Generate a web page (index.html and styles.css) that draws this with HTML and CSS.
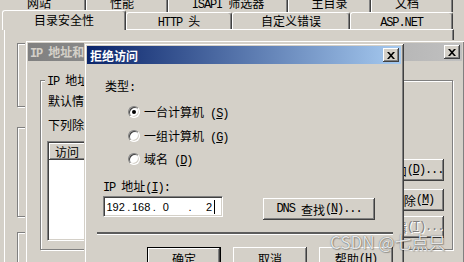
FILE: index.html
```html
<!DOCTYPE html>
<html>
<head>
<meta charset="utf-8">
<link rel="stylesheet" href="styles.css">
</head>
<body>
<div class="screen">
  <div class="sheet">
    <div class="tabrow row1">
      <div class="tab w-site">网站</div>
      <div class="tab w-perf">性能</div>
      <div class="tab w-isapi"><span class="lat">ISAPI&nbsp;</span>筛选器</div>
      <div class="tab w-home">主目录</div>
      <div class="tab w-doc">文档</div>
    </div>
    <div class="tabrow row2">
      <div class="tab sel w-sec">目录安全性</div>
      <div class="tab w-http"><span class="lat">HTTP&nbsp;</span>头</div>
      <div class="tab w-err">自定义错误</div>
      <div class="tab w-asp"><span class="lat">ASP.NET</span></div>
    </div>
    <div class="panel">
      <div class="bggroup g1"></div>
      <div class="bggroup g2"></div>
      <div class="bggroup g3"></div>
    </div>
  </div>

  <div class="win ipwin">
    <div class="titlebar">
      <span class="ttext"><span class="lat">IP&nbsp;</span>地址和域名限制</span>
      <span class="close"><svg width="8" height="7" viewBox="0 0 8 7"><path d="M0 0h2l2 2.2 2-2.2h2l-3 3.5 3 3.5h-2l-2-2.2-2 2.2h-2l3-3.5z" fill="#000"/></svg></span>
    </div>
    <div class="ibody">
      <div class="gbox">
        <div class="gtitle"><span class="lat">IP&nbsp;</span>地址访问限制</div>
        <div class="gcols">
          <div class="gleft">
            <div class="gline">默认情况下，所有计算机都将被: 授权访问</div>
            <div class="gline gl2">下列除外:</div>
            <div class="list">
              <div class="lhead"><span class="hcol">访问</span><span class="hcol hcol2"><span class="lat">IP&nbsp;</span>地址(子网掩码)</span></div>
            </div>
          </div>
          <div class="gright">
            <div class="btn sbtn">添加<span class="lat">(<u>D</u>)...</span></div>
            <div class="btn sbtn sb2">删除<span class="lat">(<u>M</u>)</span></div>
            <div class="btn sbtn sb3 disabled">编辑<span class="lat">(<u>T</u>)...</span></div>
          </div>
        </div>
      </div>
    </div>
  </div>

  <div class="win deny">
    <div class="titlebar">
      <span class="ttext">拒绝访问</span>
      <span class="close"><svg width="8" height="7" viewBox="0 0 8 7"><path d="M0 0h2l2 2.2 2-2.2h2l-3 3.5 3 3.5h-2l-2-2.2-2 2.2h-2l3-3.5z" fill="#000"/></svg></span>
    </div>
    <div class="dbody">
      <div class="dline">类型<span class="lat">:</span></div>
      <div class="radios">
        <div class="radio-row"><span class="radio on"></span><span>一台计算机<span class="lat">&nbsp;(<u>S</u>)</span></span></div>
        <div class="radio-row"><span class="radio"></span><span>一组计算机<span class="lat">&nbsp;(<u>G</u>)</span></span></div>
        <div class="radio-row"><span class="radio"></span><span>域名<span class="lat">&nbsp;(<u>D</u>)</span></span></div>
      </div>
      <div class="dline iplabel"><span class="lat">IP&nbsp;</span>地址<span class="lat">(<u>I</u>):</span></div>
      <div class="iprow">
        <div class="ipfield">
          <span class="o1">192</span><span class="dt d1">.</span><span class="o2">168</span><span class="dt d2">.</span><span class="o3">0</span><span class="dt d3">.</span><span class="o4">2</span><span class="caret"></span>
        </div>
        <div class="btn dns"><span class="lat">DNS&nbsp;</span>查找<span class="lat">(<u>N</u>)...</span></div>
      </div>
    </div>
    <div class="sep"></div>
    <div class="btnrow">
      <div class="btn dbtn default">确定</div>
      <div class="btn dbtn">取消</div>
      <div class="btn dbtn">帮助<span class="lat">(<u>H</u>)</span></div>
    </div>
  </div>

  <div class="watermark">CSDN @七点只</div>
</div>
</body>
</html>
```
FILE: styles.css
```css
* { box-sizing: border-box; }
html, body { margin: 0; padding: 0; }
body {
  width: 464px; height: 262px; overflow: hidden;
  background: #d4d0c8;
  font-family: "Noto Sans CJK SC", "Liberation Sans", sans-serif;
  font-size: 12px; color: #000;
}
.screen { position: relative; width: 464px; height: 262px; overflow: hidden; }
.lat { font-family: "Liberation Mono", monospace; font-size: 12px; letter-spacing: -1.1px; }
u { text-decoration: underline; text-underline-offset: 1px; }

/* background property sheet */
.sheet { width: 464px; }
.tabrow { display: flex; }
.row1 { margin-top: -8px; margin-left: -8px; height: 20px; }
.row2 { margin-left: 2px; height: 17px; align-items: flex-end; position: relative; z-index: 2; }
.tab {
  background: #d4d0c8;
  border-top: 1px solid #fff; border-left: 1px solid #fff; border-right: 1px solid #404040;
  box-shadow: inset -1px 0 #808080;
  border-radius: 3px 3px 0 0;
  text-align: center; white-space: nowrap;
}
.row1 .tab { height: 20px; line-height: 19px; }
.row2 .tab { height: 17px; line-height: 16px; }
.row2 .tab.sel { height: 20px; margin-bottom: -1px; padding-top: 1px; }
.w-site { width: 94px; }
.w-perf { width: 82px; padding-right: 10px; }
.w-isapi { width: 120px; }
.w-home { width: 83px; }
.w-doc { width: 82px; padding-right: 10px; }
.w-sec { width: 124px; }
.w-http { width: 106px; }
.w-err { width: 118px; }
.w-asp { width: 103px; }

.panel {
  margin-left: 4px; width: 450px; height: 240px;
  border-top: 1px solid #fff; border-left: 1px solid #fff; border-right: 1px solid #404040;
  box-shadow: inset -1px 0 #808080;
  padding-left: 12px; padding-top: 13px;
}
.bggroup { width: 300px; border: 1px solid #808080; box-shadow: inset 1px 1px #fff, 1px 1px #fff; }
.g1 { height: 64px; }
.g2 { height: 90px; margin-top: 20px; }
.g3 { height: 60px; margin-top: 15px; }

/* windows */
.win {
  position: absolute; background: #d4d0c8; padding: 3px;
  box-shadow: inset 1px 1px #d4d0c8, inset -1px -1px #404040, inset 2px 2px #fff, inset -2px -2px #808080;
}
.ipwin { left: 25px; top: 40px; width: 440px; height: 240px; z-index: 3; }
.deny { left: 84px; top: 43px; width: 320px; height: 240px; z-index: 4; }

.titlebar {
  height: 18px; display: flex; align-items: center; justify-content: space-between;
  padding: 0 2px 0 3px; font-weight: 700; white-space: nowrap;
}
.titlebar .lat { font-weight: 700; }
.deny .titlebar { background: linear-gradient(to right, #0a246a, #a6caf0); color: #fff; }
.ipwin .titlebar { background: linear-gradient(to right, #808080, #c0c0c0); color: #d4d0c8; padding-left: 2px; }
.close {
  width: 16px; height: 14px; background: #d4d0c8; flex: none;
  box-shadow: inset -1px -1px #404040, inset 1px 1px #fff, inset -2px -2px #808080;
  display: flex; align-items: center; justify-content: center; padding-right: 1px;
}
.close svg { display: block; }

/* buttons */
.btn {
  background: #d4d0c8;
  box-shadow: inset -1px -1px #404040, inset 1px 1px #fff, inset -2px -2px #808080;
  display: flex; align-items: center; justify-content: center; white-space: nowrap;
}
.btn.default { border: 1px solid #000; }
.btn.disabled { color: #808080; text-shadow: 1px 1px #fff; }

/* IP dialog body */
.ibody { padding-left: 12px; }
.gbox {
  margin-top: 19px; width: 413px; height: 170px;
  border: 1px solid #808080; box-shadow: inset 1px 1px #fff, 1px 1px #fff;
  padding-left: 7px;
}
.gtitle {
  width: fit-content; margin-top: -8px; margin-left: -3px; padding: 0 2px;
  background: #d4d0c8; line-height: 14px; white-space: nowrap;
}
.gcols { display: flex; margin-top: 5px; }
.gleft { width: 322px; flex: none; }
.gline { line-height: 14px; height: 14px; white-space: nowrap; overflow: hidden; }
.gl2 { margin-top: 10px; }
.list {
  margin-top: 9px; margin-left: -1px; width: 323px; height: 100px;
  background: #fff;
  border: 1px solid; border-color: #808080 #fff #fff #808080;
  box-shadow: inset 1px 1px #404040, inset -1px -1px #d4d0c8;
  padding: 1px 0 0 1px;
}
.lhead { display: flex; height: 17px; }
.hcol {
  width: 90px; background: #d4d0c8; line-height: 17px; padding-left: 6px; white-space: nowrap;
  box-shadow: inset -1px -1px #404040, inset 1px 1px #fff, inset -2px -2px #808080;
}
.hcol2 { width: 229px; }
.gright { margin-left: 8px; width: 66px; padding-top: 65px; }
.sbtn { height: 22px; padding-left: 4px; }
.sb2 { margin-top: 8px; }
.sb3 { margin-top: 5px; }

/* deny dialog body */
.dbody { padding: 15px 0 0 18px; }
.dline { line-height: 14px; height: 14px; white-space: nowrap; }
.radios { margin-top: 12px; margin-left: 23px; display: flex; flex-direction: column; gap: 9.5px; }
.radio-row { display: flex; align-items: center; gap: 4px; height: 14px; white-space: nowrap; }
.radio {
  width: 12px; height: 12px; border-radius: 50%; background: #fff; flex: none;
  border: 1px solid; border-color: #808080 #fff #fff #808080;
  box-shadow: inset 1px 1px #404040, inset -1px -1px #d4d0c8;
  display: flex; align-items: center; justify-content: center;
}
.radio.on::after { content: ""; width: 4px; height: 4px; border-radius: 50%; background: #000; }
.iplabel { margin-top: 13px; margin-left: -2px; }
.iprow { display: flex; align-items: flex-start; gap: 40px; margin-top: 3px; margin-left: -2px; }
.ipfield {
  width: 120px; height: 21px; background: #fff; flex: none;
  border: 1px solid; border-color: #808080 #fff #fff #808080;
  box-shadow: inset 1px 1px #404040, inset -1px -1px #d4d0c8;
  display: flex; align-items: center;
  font-family: "Liberation Sans", sans-serif; font-size: 11px; white-space: nowrap;
}
.o1 { margin-left: 2.5px; }
.d1 { margin-left: 2.5px; }
.o2 { margin-left: 1.5px; }
.d2 { margin-left: 2.5px; }
.o3 { margin-left: 7px; }
.d3 { margin-left: 19.5px; }
.o4 { margin-left: 14.5px; }
.caret { margin-left: 1.5px; width: 1px; height: 14px; background: #000; }
.dns { width: 112px; height: 22px; margin-top: 2px; }
.sep { margin: 12px 0 0 10px; width: 296px; height: 3px; border-top: 2px solid #5c5c5c; border-bottom: 1px solid #fff; }
.btnrow { display: flex; gap: 12px; margin: 12px 0 0 60px; }
.dbtn { width: 74px; height: 23px; }

.watermark {
  position: absolute; left: 330px; top: 231px; z-index: 10;
  font-family: "Noto Sans CJK SC", "Liberation Sans", sans-serif; font-size: 17px; line-height: 22px;
  color: rgba(255, 255, 255, 0.85);
  text-shadow: 0 0 1px rgba(40, 40, 40, 0.8), 1px 1px 1px rgba(0, 0, 0, 0.25);
  white-space: nowrap;
}
```
